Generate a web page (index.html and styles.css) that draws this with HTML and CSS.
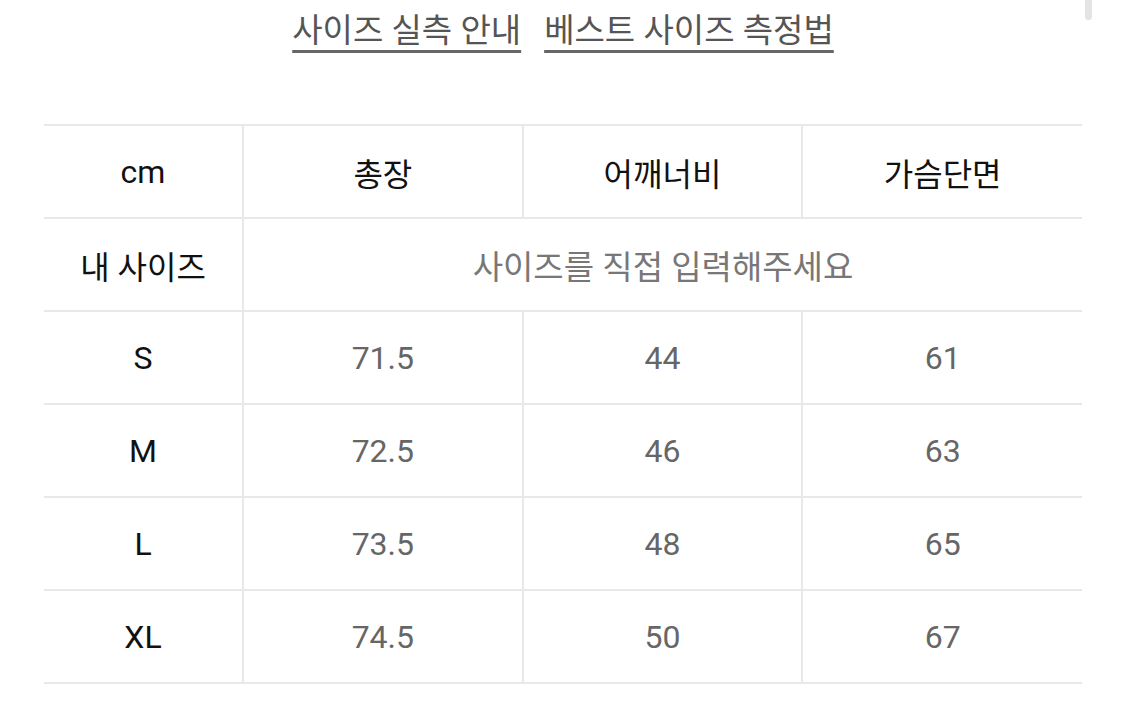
FILE: index.html
```html
<!DOCTYPE html>
<html lang="ko">
<head>
<meta charset="utf-8">
<link rel="stylesheet" href="styles.css">
</head>
<body>
<div class="scrollbar"></div>
<div class="page">
  <nav class="links">
    <a class="link" href="#">사이즈 실측 안내</a>
    <a class="link" href="#">베스트 사이즈 측정법</a>
  </nav>
  <table class="size-table">
    <colgroup>
      <col class="c-first">
      <col class="c-val">
      <col class="c-val">
      <col class="c-val">
    </colgroup>
    <tr class="head">
      <td>cm</td><td>총장</td><td>어깨너비</td><td>가슴단면</td>
    </tr>
    <tr>
      <td class="label">내 사이즈</td>
      <td class="hint" colspan="3">사이즈를 직접 입력해주세요</td>
    </tr>
    <tr><td class="label">S</td><td>71.5</td><td>44</td><td>61</td></tr>
    <tr><td class="label">M</td><td>72.5</td><td>46</td><td>63</td></tr>
    <tr><td class="label">L</td><td>73.5</td><td>48</td><td>65</td></tr>
    <tr><td class="label">XL</td><td>74.5</td><td>50</td><td>67</td></tr>
  </table>
</div>
</body>
</html>
```
FILE: styles.css
```css
html, body {
  margin: 0;
  padding: 0;
  background: #fff;
}
body {
  font-family: Roboto, "Noto Sans CJK KR", sans-serif;
  color: #111;
}
.scrollbar {
  position: absolute;
  top: -6px;
  left: 1085px;
  width: 7px;
  height: 26px;
  border-radius: 4px;
  background: #e4e4e4;
}
.page {
  padding: 0 43px 0 44px;
}
.links {
  display: flex;
  justify-content: center;
  gap: 23px;
  padding-top: 8px;
  height: 124px;
  box-sizing: border-box;
}
.link {
  font-size: 33px;
  line-height: 46px;
  color: #555;
  text-decoration: underline;
  text-decoration-thickness: 3px;
  text-underline-offset: 8px;
  text-decoration-color: #666;
}
.size-table {
  width: 1038px;
  border-collapse: collapse;
  table-layout: fixed;
}
.c-first { width: 199px; }
.size-table td {
  height: 91px;
  padding: 0;
  border-top: 2px solid #e8e8e8;
  border-bottom: 2px solid #e8e8e8;
  border-left: 2px solid #e8e8e8;
  text-align: center;
  vertical-align: middle;
  font-size: 32px;
  color: #666;
}
.size-table td:first-child {
  border-left: none;
}
.size-table .head td {
  color: #111;
}
.size-table td.label {
  color: #111;
}
.size-table td.hint {
  color: #777;
  font-size: 33px;
}
```
